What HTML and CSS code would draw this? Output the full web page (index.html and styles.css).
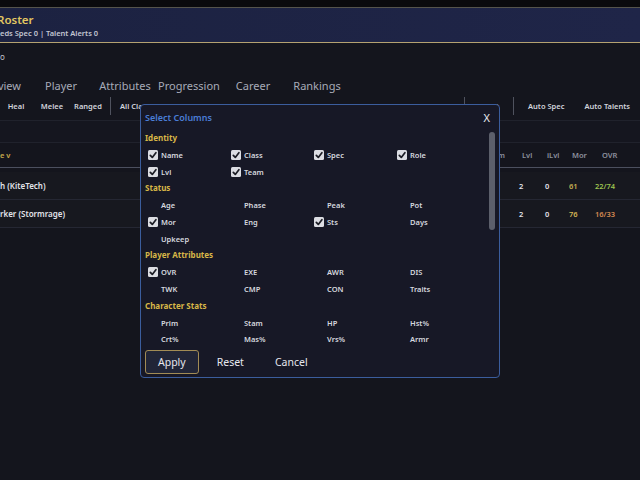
FILE: index.html
```html
<!DOCTYPE html>
<html lang="en">
<head>
    <meta charset="UTF-8">
    <meta name="viewport" content="width=device-width, initial-scale=1.0">
    <title>Roster</title>
    <link rel="stylesheet" href="styles.css">
</head>
<body>

    <div class="app">
        <div class="topbar"></div>

        <!-- Banner -->
        <header class="banner">
            <h1 class="title">Roster</h1>
            <div class="subtitle">eds Spec 0 | Talent Alerts 0</div>
        </header>

        <div class="crumb">o</div>

        <!-- Tabs -->
        <nav class="tabs">
            <span class="tab">Overview</span>
            <span class="tab">Player</span>
            <span class="tab">Attributes</span>
            <span class="tab">Progression</span>
            <span class="tab">Career</span>
            <span class="tab">Rankings</span>
        </nav>

        <!-- Filters -->
        <div class="filters">
            <span class="fbtn">Heal</span>
            <span class="fbtn">Melee</span>
            <span class="fbtn">Ranged</span>
            <span class="sep sep-left"></span>
            <span class="fbtn-wide">All Classes</span>
            <div class="filters-right">
                <span class="sep"></span>
                <span class="abtn">Reset</span>
                <span class="sep"></span>
                <span class="abtn">Auto Spec</span>
                <span class="abtn">Auto Talents</span>
            </div>
        </div>

        <div class="searchbar"></div>

        <!-- Roster table -->
        <div class="table">
            <div class="trow thead">
                <span class="c-name">e v</span>
                <span class="c-team">Team</span>
                <span class="c-gap"></span>
                <span class="c-lvl">Lvl</span>
                <span class="c-ilvl">iLvl</span>
                <span class="c-mor">Mor</span>
                <span class="c-ovr">OVR</span>
            </div>
            <div class="trow">
                <span class="c-name">h (KiteTech)</span>
                <span class="c-team"></span>
                <span class="c-gap"></span>
                <span class="c-lvl">2</span>
                <span class="c-ilvl">0</span>
                <span class="c-mor mor-mid">61</span>
                <span class="c-ovr ovr-good">22/74</span>
            </div>
            <div class="trow">
                <span class="c-name">rker (Stormrage)</span>
                <span class="c-team"></span>
                <span class="c-gap"></span>
                <span class="c-lvl">2</span>
                <span class="c-ilvl">0</span>
                <span class="c-mor mor-high">76</span>
                <span class="c-ovr ovr-low">16/33</span>
            </div>
        </div>
    </div>

    <!-- Select Columns dialog -->
    <div class="modal">
        <div class="modal-head">
            <span class="modal-title">Select Columns</span>
            <span class="modal-close">X</span>
        </div>

        <div class="modal-body">
            <div class="col-list" id="col-list"></div>
            <div class="scroll-track"><div class="scroll-thumb"></div></div>
        </div>

        <div class="modal-foot">
            <button class="btn btn-primary">Apply</button>
            <button class="btn">Reset</button>
            <button class="btn">Cancel</button>
        </div>
    </div>

    <script>
        // Column groups shown in the dialog, true = checked
        const groups = [
            ["Identity", [["Name", true], ["Class", true], ["Spec", true], ["Role", true], ["Lvl", true], ["Team", true]]],
            ["Status", [["Age", false], ["Phase", false], ["Peak", false], ["Pot", false], ["Mor", true], ["Eng", false], ["Sts", true], ["Days", false], ["Upkeep", false]]],
            ["Player Attributes", [["OVR", true], ["EXE", false], ["AWR", false], ["DIS", false], ["TWK", false], ["CMP", false], ["CON", false], ["Traits", false]]],
            ["Character Stats", [["Prim", false], ["Stam", false], ["HP", false], ["Hst%", false], ["Crt%", false], ["Mas%", false], ["Vrs%", false], ["Armr", false]]]
        ];

        const check = '<svg viewBox="0 0 10 10" width="10" height="10"><path d="M2.3 5.3 L4.3 7.4 L7.9 2.7" fill="none" stroke="#1b1c24" stroke-width="1.7" stroke-linecap="round" stroke-linejoin="round"/></svg>';

        let list = document.getElementById("col-list");
        groups.forEach(([title, cols]) => {
            let head = document.createElement("div");
            head.className = "group-title";
            head.textContent = title;
            list.appendChild(head);

            let grid = document.createElement("div");
            grid.className = "col-grid";
            cols.forEach(([name, on]) => {
                let item = document.createElement("div");
                item.className = "col-item";
                item.innerHTML = `<span class="box ${on ? "" : "off"}">${check}</span><span>${name}</span>`;
                grid.appendChild(item);
            });
            list.appendChild(grid);
        });
    </script>

</body>
</html>
```

FILE: styles.css
```css
body {
    margin: 0;
    width: 640px;
    height: 480px;
    overflow: hidden;
    background-color: #14151d;
    font-family: "Noto Sans", "Open Sans", sans-serif;
    color: #d4d6de;
}
.app {
    width: 640px;
    overflow: hidden;
}
.topbar {
    height: 7px;
    background: #0a0a0d;
}
/* Banner */
.banner {
    height: 34px;
    border-top: 1px solid #55544c;
    border-bottom: 1px solid #b5a271;
    background: linear-gradient(90deg, #1c2241, #1f2548);
}
.title {
    margin: 0 0 0 -3px;
    padding-top: 5px;
    height: 14px;
    line-height: 14px;
    font-size: 11.5px;
    font-weight: 600;
    color: #e2c661;
}
.subtitle {
    margin-top: 1px;
    height: 10px;
    line-height: 10px;
    font-size: 7.5px;
    font-weight: 600;
    color: #c3c6d2;
}
.crumb {
    margin-top: 9px;
    height: 10px;
    line-height: 10px;
    font-size: 8px;
    color: #c0c2cc;
}
/* Tabs */
.tabs {
    display: flex;
    align-items: center;
    height: 20px;
    margin-top: 13px;
    margin-left: -35px;
}
.tab {
    min-width: 64px;
    text-align: center;
    font-size: 11px;
    color: #a7abb8;
    white-space: nowrap;
}
/* Filter row */
.filters {
    display: flex;
    align-items: center;
    height: 20px;
    margin-top: 1px;
    margin-left: -2px;
    font-size: 7.5px;
    font-weight: 600;
    color: #d2d4dc;
    white-space: nowrap;
}
.fbtn {
    width: 36px;
    text-align: center;
}
.sep {
    width: 1px;
    height: 18px;
    background: #4f525e;
    margin: 0 4px;
}
.sep-left {
    margin: 0 9px 0 4px;
}
.filters-right {
    display: flex;
    align-items: center;
    margin-left: auto;
}
.abtn {
    padding: 0 10px;
}
.searchbar {
    margin-top: 4px;
    height: 21px;
    background: #15161f;
    border-top: 1px solid #20222c;
    border-bottom: 1px solid #20222c;
}
/* Table */
.trow {
    display: flex;
    align-items: center;
    height: 27px;
    border-bottom: 1px solid #252733;
    background: #17181f;
    font-size: 7.5px;
    font-weight: 600;
    color: #e2e3ea;
    white-space: nowrap;
}
.thead {
    height: 24px;
    background: transparent;
    border-bottom: 1px solid #4b4f5e;
    color: #8c909d;
    margin-bottom: 4px;
}
.trow .c-name {
    flex: 1;
    font-size: 8px;
}
.thead .c-name {
    color: #c9aa4c;
    font-size: 7.5px;
}
.c-team {
    width: 40px;
    text-align: right;
}
.c-gap {
    width: 14px;
}
.c-lvl {
    width: 26px;
}
.c-ilvl {
    width: 24px;
}
.c-mor {
    width: 26px;
}
.c-ovr {
    width: 45px;
}
.thead .c-lvl { padding-left: 3px; width: 23px; }
.thead .c-ilvl { padding-left: 2px; width: 22px; }
.thead .c-mor { padding-left: 3px; width: 23px; }
.thead .c-ovr { padding-left: 7px; width: 38px; }
.mor-mid { color: #c7b253; }
.mor-high { color: #d4b655; }
.ovr-good { color: #9cc24f; }
.ovr-low { color: #d68a52; }

/* Select Columns dialog */
.modal {
    position: absolute;
    left: 140px;
    top: 104px;
    width: 358px;
    height: 272px;
    border: 1px solid #3b5d9d;
    border-radius: 4px;
    background: #171826;
    display: flex;
    flex-direction: column;
}
.modal-head {
    display: flex;
    justify-content: space-between;
    align-items: center;
    height: 25px;
    padding: 0 9px 0 4px;
}
.modal-title {
    font-size: 9px;
    font-weight: 600;
    color: #4a7dd6;
}
.modal-close {
    font-size: 11px;
    color: #ecedf3;
}
.modal-body {
    display: flex;
    height: 217.75px;
}
.col-list {
    flex: 1;
    overflow: hidden;
    padding-left: 4px;
}
.group-title {
    height: 16.75px;
    line-height: 16.75px;
    font-size: 8px;
    font-weight: 700;
    color: #d8b748;
}
.col-grid {
    display: grid;
    grid-template-columns: repeat(4, 83px);
    padding-left: 3px;
}
.col-item {
    display: flex;
    align-items: center;
    gap: 3px;
    height: 16.75px;
    font-size: 7.5px;
    font-weight: 600;
    color: #d5d7df;
}
.box {
    width: 10px;
    height: 10px;
    border-radius: 1.5px;
    background: #dcdde3;
    display: flex;
}
.box.off {
    visibility: hidden;
}
.scroll-track {
    width: 6px;
    margin: 0 4px 0 10px;
}
.scroll-thumb {
    margin-top: 2px;
    height: 98px;
    border-radius: 3px;
    background: #5c5f6b;
}
.modal-foot {
    display: flex;
    gap: 5px;
    margin-top: 2.25px;
    padding-left: 4px;
}
.btn {
    display: flex;
    align-items: center;
    height: 24px;
    padding: 0 12px;
    border: 1px solid transparent;
    border-radius: 3px;
    background: transparent;
    font-family: "Noto Sans", "Open Sans", sans-serif;
    font-size: 10.5px;
    line-height: 14px;
    color: #e6e7ee;
}
.btn-primary {
    background: #212537;
    border-color: #a28c55;
}
```
